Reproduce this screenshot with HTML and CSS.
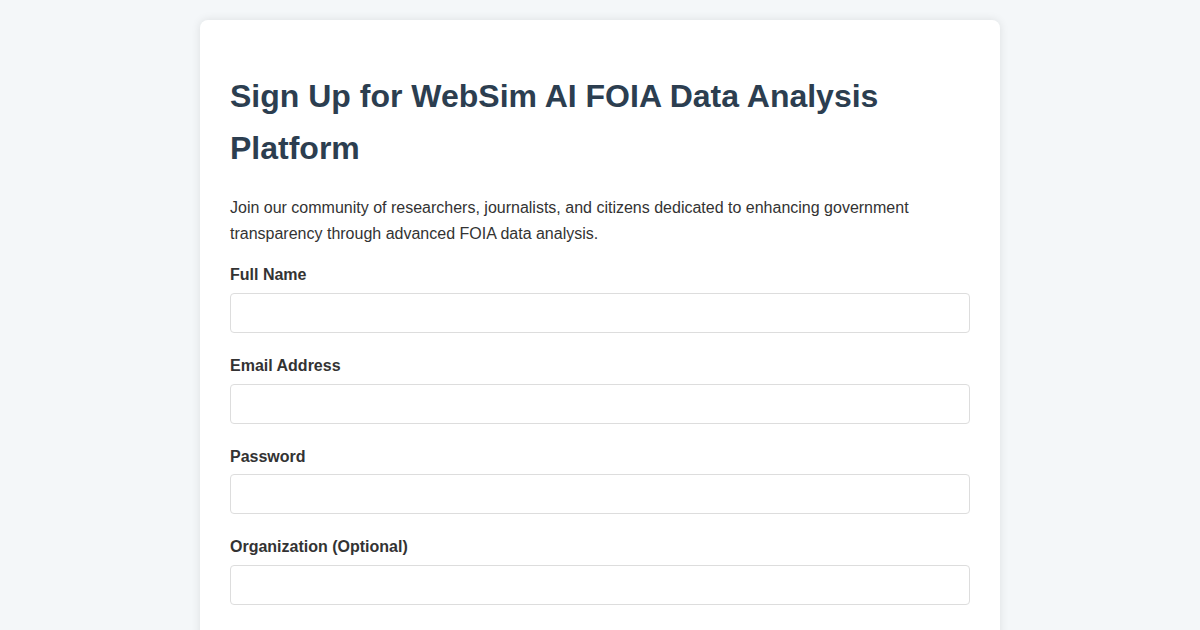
FILE: index.html
```html
<!DOCTYPE html>
<html lang="en">

<head>
    <meta charset="UTF-8">
    <meta name="viewport" content="width=device-width, initial-scale=1.0">
    <title>Sign Up - WebSim AI FOIA</title>
    <link rel="stylesheet" href="styles.css">
</head>

<body>
    <div class="container">
        <h1>Sign Up for WebSim AI FOIA Data Analysis Platform</h1>
        <p>Join our community of researchers, journalists, and citizens dedicated to enhancing government transparency through advanced FOIA data analysis.</p>
        <form class="signup-form">
            <div class="form-group">
                <label for="fullname">Full Name</label>
                <input type="text" id="fullname" name="fullname">
            </div>
            <div class="form-group">
                <label for="email">Email Address</label>
                <input type="email" id="email" name="email">
            </div>
            <div class="form-group">
                <label for="password">Password</label>
                <input type="password" id="password" name="password">
            </div>
            <div class="form-group">
                <label for="org">Organization (Optional)</label>
                <input type="text" id="org" name="org">
            </div>
        </form>
    </div>
</body>
</html>
```

FILE: styles.css
```css
body {
    margin: 0;
    font-family: "Liberation Sans", Arial, sans-serif;
    line-height: 1.6;
    color: #333;
    background-color: #f4f7f9;
}
.container {
    max-width: 740px;
    margin: 20px auto;
    padding: 30px;
    background-color: #fff;
    border-radius: 8px;
    box-shadow: 0 0 10px rgba(0, 0, 0, 0.1);
}
h1 {
    font-size: 32px;
    color: #2c3e50;
}
.form-group {
    margin-bottom: 20px;
}
label {
    display: block;
    font-weight: bold;
    margin-bottom: 5px;
}
input {
    display: block;
    width: 100%;
    height: 40px;
    box-sizing: border-box;
    padding: 10px;
    border: 1px solid #ddd;
    border-radius: 4px;
    font-size: 16px;
    font-family: inherit;
}
```
